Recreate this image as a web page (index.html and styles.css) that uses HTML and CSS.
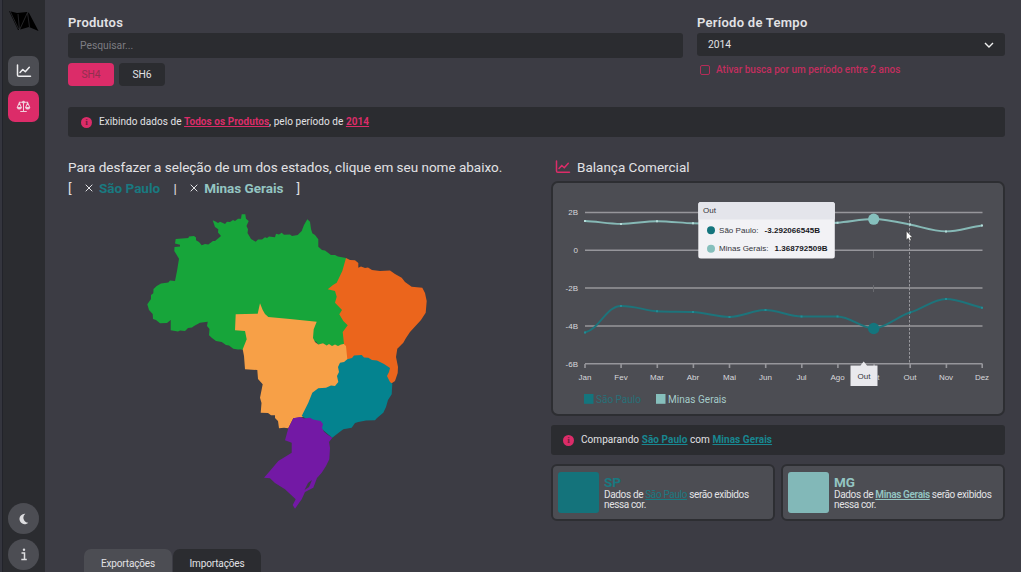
FILE: index.html
```html
<!DOCTYPE html>
<html lang="pt-BR">
<head>
<meta charset="utf-8">
<title>Balança Comercial</title>
<link rel="stylesheet" href="styles.css">
</head>
<body>
<div class="app">
  <nav class="sidebar">
    <svg class="logo" viewBox="0 0 30 20" width="30" height="20"><path d="M0 0L8 2L18 1L20 2L29.500 20L20 16L13 18L9 19Z" fill="#000"/><path d="M9 3L10.500 19L18.500 1.500L20.500 16M1 0L9.500 18" fill="none" stroke="#3a3b40" stroke-width=".6"/></svg>
    <a class="nav-btn"><svg viewBox="0 0 16 14" width="16" height="14"><path d="M1.500 1V11Q1.500 12.300 2.800 12.300H14.500M4 8.500L6.800 5.500L9.300 7.700L13.300 3.300" class="line-icon"/></svg></a>
    <a class="nav-btn active"><svg viewBox="0 0 16 14" width="15" height="13"><path d="M3 2.500H13M8 1V12.200M4.500 12.300H11.500M3.500 3L1.200 8.200H5.800ZM12.500 3L10.200 8.200H14.800Z" class="scale-icon"/><path d="M1 8.300H6Q5.500 10.300 3.500 10.300T1 8.300ZM10 8.300H15Q14.500 10.300 12.500 10.300T10 8.300Z" fill="#f0cfdb"/><circle cx="8" cy="2.300" r="1.500" fill="#f0cfdb"/></svg></a>
    <span class="spacer"></span>
    <a class="nav-btn round"><svg viewBox="0 0 12 12" width="12" height="12"><path d="M7.300.8A5.200 5.200 0 1 0 10.300 9.700A5 5 0 0 1 7.300.8Z" fill="#dddde0"/></svg></a>
    <a class="nav-btn round info"><svg viewBox="0 0 8 13" width="8" height="13"><path d="M1.500 5H4.500V11.500M1.300 11.500H6.800" fill="none" stroke="#dddde0" stroke-width="1.500"/><circle cx="4" cy="1.700" r="1.200" fill="#dddde0"/></svg></a>
  </nav>
  <main class="main">
    <section class="filters">
      <div class="products">
        <h2 class="label">Produtos</h2>
        <div class="search">Pesquisar...</div>
        <div class="toggles"><span class="toggle on">SH4</span><span class="toggle">SH6</span></div>
      </div>
      <div class="period">
        <h2 class="label">Período de Tempo</h2>
        <div class="select"><span>2014</span><svg viewBox="0 0 10 6" width="10" height="6"><path d="M1 1L5 5L9 1" fill="none" stroke="#f0f0f0" stroke-width="1.400"/></svg></div>
        <div class="check"><span class="box"></span><span>Ativar busca por um período entre 2 anos</span></div>
      </div>
    </section>
    <div class="notice"><span class="dot">i</span><p class="notice-text">Exibindo dados de <b class="pink">Todos os Produtos</b>, pelo período de <b class="pink">2014</b></p></div>
    <section class="columns">
      <div class="left">
        <p class="hint">Para desfazer a seleção de um dos estados, clique em seu nome abaixo.</p>
        <div class="states"><span class="bracket">[</span><svg class="x" viewBox="0 0 8 8"><path d="M.7.700L7.300 7.300M7.300.7L.7 7.300"/></svg><b class="sp">São Paulo</b><span class="bar">|</span><svg class="x" viewBox="0 0 8 8"><path d="M.7.700L7.300 7.300M7.300.7L.7 7.300"/></svg><b class="mg">Minas Gerais</b><span class="close">]</span></div>
        <svg class="map" viewBox="140 205 300 310" width="300" height="310">
          <path class="norte" d="M212.700 219.300L216 220.700L218 222L220 220.700L223 222L225 223L227 220.700L230 221L233 219L235 220L238 217.700L241 217.700L241.700 213.300L245.300 213.300L246 217.700L248.700 220L246.500 225L248 228.300L247.500 232L249.300 235L251 238L255.700 240.700L258 238.500L262 238.500L265 236.300L267 237L269 235.500L275 236.300L276 232.700L279 233.500L281.700 231.700L284 233.700L290 233.500L292 235L297.700 234L301.700 230L304 224L307.300 218.300L310 220.700L311 228L312.300 232.300L315 234L318.300 238.300L318.300 245.700L322 249L325 249.500L331 254L335 254L338 255.500L346 257L350 300L347.700 345L344.300 343.300L341 344L338 345.700L335 344L332 345.500L329 343.500L326.700 345L323 342.500L318.300 343.700L316 340.500L240 349L242.700 348.300L238 348.500L233.300 347.700L229 344.500L226 344L221.700 341L216 340L212 337L209 334.300L209.500 328L207 325L207.700 320.700L200 321.700L194 325L192 326.500L188 327L185 330L180 329.500L178 330.500L170.700 329.300L170.700 319L167 322L160 322.300L156 319L153 318L152.700 313L149 309L147.300 303.300L151 298L151 294L153.300 292.300L153.500 288L156.700 285L161 282.500L168.300 281.500L170 279.500L175 280L177 270L179 257.700L174.300 250L174.500 246L180 245.500L180 243.800L175 242.500L175.700 238L188.300 237L189 235.500L194 235L196 236.500L196 239.300L199 241L201.700 244.300L205 243L208.300 243.500L213 240L215 240L221 235L218 231.500L218.300 228.300L215 226Z"/>
          <path class="centro" d="M260 302.300L262.700 309L265 313L268.300 316L290 318L316.700 320.700L313.700 328.300L313 337L315 341L318.300 343.500L323 342.200L326.700 344.500L329 343L332 345L335 343.500L338 345L341 343.500L348 342L350 360L338 386L303 416L293.300 417.300L288.300 427.300L284 426.700L279 427.300L278 420L275 417L275 414.300L271 414.300L268 412L260.700 411.700L261.500 402L260 396.700L262.700 383.300L258 378L257.300 369L245 368.300L244 355L242.700 348.300L246.700 338.300L245 330L235 329.300L235.700 313.300L257.700 312.700Z"/>
          <path class="nordeste" d="M346 257L350 259L355 259.300L358.300 262L358.300 266.700L361 265.500L365 267L368 266.500L372 269L380 270L390 269.500L395 273L401.700 276.700L405 281L411.700 285.700L422.300 286.700L425 292L426.700 300L425.700 311.700L421 319L410 331L406 337L403.300 341.700L397.300 347.700L396 356L398 366L397.700 372L395 380L391 382.700L380 376L348 360L347.300 358.300L346 345L344 343.300L342.700 331L347.700 324.300L343.300 320L339.300 313.300L342 309L335 301.700L336.700 295.700L335 290L327.700 288.300L333 284L336.700 281.700L342.300 270Z"/>
          <path class="sudeste" d="M347.300 358.300L352 357L354 354.500L361.700 354L364 356.500L368.300 356.700L372 359L377 359.500L380 361L384 363L390 367L389 371L387 375L390 381L392.300 382.700L391.700 393.300L388 399L386 406L383.300 411.700L377 417L375 419.300L366 419.500L358.300 421L355 422L351.700 426.700L343.300 428.300L337 433L332.300 436.700L318 425L301.700 415L308.300 401.700L312.300 391.700L318.300 387.300L326 386.700L331 384.500L335 385L338.300 381L337 375L339 371L338 366L340 361.700L344 361Z"/>
          <path class="sul" d="M293.300 417.300L300 416L304 417.500L310 416.700L313 418.500L320.700 420L323 423L322 427L324 430.700L328 434L332.300 436.700L329 441L330 447L329.300 458.300L326 465L321.700 471.700L317 477L313.300 486.700L305 491L301.700 498.300L299 502L295 507.700L292.700 504L295.700 498.300L285 488.300L275 482L270 477.300L264 476.700L269 471L278.300 460L291.700 451.700L291.700 441.700L285 439.300L288.300 427.300Z"/>
          <path d="M312 479L308 482L304.500 489L309 486Z" fill="#3c3c44"/>
        </svg>
        <div class="tabs"><span class="tab on">Exportações</span><span class="tab">Importações</span></div>
      </div>
      <div class="right">
        <h3 class="chart-title"><svg viewBox="0 0 16 14" width="16" height="14"><path d="M1.500 1V11Q1.500 12.300 2.800 12.300H14.500M4 8.500L6.800 5.500L9.300 7.700L13.300 3.300"/></svg><span>Balança Comercial</span></h3>
        <div class="chart-card">
          <svg class="chart" viewBox="553 183 450 230" width="450" height="230">
            <path class="grid" d="M585 212.500H982.500M585 250.300H982.500M585 288H982.500M585 326H982.500M585 363.800H982.500M585 364V368M621.100 364V368M657.300 364V368M693.400 364V368M729.500 364V368M765.700 364V368M801.800 364V368M837.900 364V368M874.100 364V368M910.200 364V368M946.400 364V368M982.200 364V368"/>
            <path class="ghost" d="M873.500 251V258M873.500 285V292"/>
            <path class="hover" d="M909.500 212V364"/>
            <g class="axis" text-anchor="end"><text x="578" y="215.300">2B</text><text x="578" y="253">0</text><text x="578" y="290.800">-2B</text><text x="578" y="328.800">-4B</text><text x="578" y="366.600">-6B</text></g>
            <g class="axis month" text-anchor="middle"><text x="585" y="380">Jan</text><text x="621" y="380">Fev</text><text x="657" y="380">Mar</text><text x="693" y="380">Abr</text><text x="729.500" y="380">Mai</text><text x="765.500" y="380">Jun</text><text x="801.500" y="380">Jul</text><text x="837.500" y="380">Ago</text><text x="873.500" y="380">Set</text><text x="910" y="380">Out</text><text x="946" y="380">Nov</text><text x="982" y="380">Dez</text></g>
            <path class="series mg-line" d="M585 221C597 221.500 609 223.900 621 223.900S645 221.200 657 221.200S681 222.800 693 223.300S718 224 729.500 224S754 223 765.500 223S790 224 801.500 224S826 223.500 837.500 222.700S862 219 873.500 219S898 222 910 224.500S934 231.400 946 231.400S970 227 982 225.500"/>
            <path class="series sp-line" d="M585 332.500C600 329 606 306 621 306S645 310.500 657 311.300S681 311.400 693 312S718 317 729.500 317S754 310 765.500 310S790 316.500 801.500 316.500H837.500C850 316.500 862 328.500 873.500 328.500S898 316 910 312.500S934 299 946 299S970 305 982 307.700"/>
            <path class="marks" d="M585 221h.01M621 223.900h.01M657 221.200h.01M693 223.300h.01M837.500 222.700h.01M910 224.500h.01M946 231.400h.01M982 225.500h.01"/>
            <path class="marks sp-marks" d="M585 332.500h.01M621 306h.01M657 311.300h.01M693 312h.01M729.500 317h.01M765.500 310h.01M801.500 316.500h.01M837.500 316.500h.01M910 312.500h.01M946 299h.01M982 307.700h.01"/>
            <circle cx="873.700" cy="219.200" r="5.600" fill="#86c0bd"/><circle cx="873.700" cy="328.500" r="5.700" fill="#14757d"/>
            <rect x="584" y="394" width="9.500" height="9.800" fill="#14757d"/><text class="legend" x="596" y="402.500" textLength="45" fill="#287078">São Paulo</text>
            <rect x="656" y="394" width="9.500" height="9.800" fill="#86bfbc"/><text class="legend" x="668" y="402.500" textLength="58.500" fill="#a5cbc9">Minas Gerais</text>
            <path d="M850.500 365.500H860.500L863.700 361.500L867 365.500H877.500V386H850.500Z" fill="#e9e9ed"/><text class="tip" x="857.500" y="378.800" textLength="13">Out</text>
            <rect x="698.300" y="202" width="136.500" height="56.500" rx="2.500" fill="#f2f2f5"/><path d="M698.300 219.500V204.500Q698.300 202 700.800 202H832.300Q834.800 202 834.800 204.500V219.500Z" fill="#e4e5eb"/>
            <text class="tip" x="703" y="213.300" textLength="13">Out</text>
            <circle cx="711" cy="230.300" r="4" fill="#14757d"/><text class="tip" x="719" y="233" textLength="39.500">São Paulo:</text><text class="tip strong" x="764.500" y="233" textLength="55.500">-3.292066545B</text>
            <circle cx="711" cy="248.700" r="4" fill="#86bfbc"/><text class="tip" x="719" y="251.300" textLength="49.500">Minas Gerais:</text><text class="tip strong" x="774.500" y="251.300" textLength="53">1.368792509B</text>
            <path d="M906.300 231L906.300 240L908.300 238.200L909.700 241L911.200 240.200L910 237.500L912.500 237.200Z" fill="#fff" stroke="#222" stroke-width=".5"/>
          </svg>
        </div>
        <div class="notice compare"><span class="dot">i</span><p class="notice-text">Comparando <b class="teal">São Paulo</b> com <b class="teal">Minas Gerais</b></p></div>
        <div class="cards">
          <div class="card"><span class="swatch sp-bg"></span><div><h4 class="code sp">SP</h4><p class="desc">Dados de <u class="sp">São Paulo</u> serão exibidos<br>nessa cor.</p></div></div>
          <div class="card"><span class="swatch mg-bg"></span><div><h4 class="code mg">MG</h4><p class="desc">Dados de <u class="mg bold">Minas Gerais</u> serão exibidos<br>nessa cor.</p></div></div>
        </div>
      </div>
    </section>
  </main>
</div>
</body>
</html>
```
FILE: styles.css
```css
* { box-sizing: border-box; }
body { margin: 0; background: #3c3c44; color: #e2e2e5; font-family: Roboto, "Liberation Sans", sans-serif; overflow: hidden; }
h2, h3, h4, p { margin: 0; }
.app { display: flex; height: 572px; overflow: hidden; }
.sidebar { width: 45px; flex: none; background: #2b2c30; border-left: 2px solid #34353e; box-shadow: inset 1px 0 #22232a; padding: 11px 0 2px 6px; display: flex; flex-direction: column; }
.logo { display: block; margin: 0 0 25px 1px; }
.nav-btn { width: 31px; height: 30px; border-radius: 7px; background: #4c4d53; display: flex; align-items: center; justify-content: center; margin-bottom: 5px; flex: none; }
.nav-btn.active { background: #dc2c69; height: 31px; }
.nav-btn.round { border-radius: 50%; width: 31px; height: 31px; }
.nav-btn.round.info { margin: 0; }
.line-icon { fill: none; stroke: #eeeef0; stroke-width: 1.5; stroke-linecap: round; stroke-linejoin: round; }
.scale-icon { fill: none; stroke: #f0cfdb; stroke-width: 1.1; stroke-linejoin: round; }
.spacer { flex: 1; }
.main { flex: 1; min-width: 0; padding: 14px 16px 0 23px; display: flex; flex-direction: column; }
.filters { display: flex; gap: 14px; height: 93px; flex: none; }
.products { width: 615px; }
.period { flex: 1; }
.label { font-size: 13px; line-height: 17px; font-weight: 600; letter-spacing: .27px; height: 19px; }
.search { height: 25px; background: #2b2c30; border-radius: 3px; padding: 0 12px; line-height: 25px; font-size: 10.300px; color: #7d7d83; }
.toggles { display: flex; gap: 5px; margin-top: 5px; }
.toggle { width: 46px; height: 23px; border-radius: 4px; background: #2b2c30; text-align: center; line-height: 23px; font-size: 10.300px; }
.toggle.on { background: #dc2c69; color: #91304f; }
.select { height: 23px; background: #2b2c30; border-radius: 3px; display: flex; justify-content: space-between; align-items: center; padding: 0 11px; font-size: 10.300px; }
.check { display: flex; align-items: center; gap: 6px; margin: 6px 0 0 3px; font-size: 10px; line-height: 16px; font-weight: 500; color: #c22e5e; }
.box { width: 10px; height: 10px; border: 1px solid #b52c58; border-radius: 2px; }
.notice { height: 30px; flex: none; border-radius: 3px; background: #2b2c30; display: flex; align-items: center; gap: 7px; padding-left: 13px; }
.dot { width: 11px; height: 11px; border-radius: 50%; background: #dc2c69; color: #701d3b; font: bold 9px/11px "Liberation Serif", serif; text-align: center; }
.notice-text { font-size: 10px; line-height: 14px; white-space: nowrap; letter-spacing: .06px; }
.notice-text b { text-decoration: underline; font-weight: 700; }
.pink { color: #dc2c69; }
.teal { color: #188791; }
.sp { color: #197980; }
.mg { color: #94c5c2; }
.columns { flex: 1; display: flex; min-height: 0; }
.left { width: 483px; padding-top: 21px; flex: none; display: flex; flex-direction: column; }
.hint { font-size: 13.500px; line-height: 19px; white-space: nowrap; letter-spacing: -.01px; }
.states { height: 20px; margin: 3px 0 2px; display: flex; align-items: center; font-size: 13.500px; }
.x { width: 8px; height: 8px; margin-right: 6px; fill: none; stroke: #e2e2e5; }
.bracket { width: 17px; }
.bar { width: 30px; text-align: center; }
.close { margin-left: 13px; }
.map { display: block; margin: 8px 0 0 72px; flex: none; }
.norte { fill: #17a53a; }
.nordeste { fill: #eb651c; }
.centro { fill: #f7a047; }
.sudeste { fill: #04838f; }
.sul { fill: #7319a5; }
.tabs { display: flex; gap: 1px; margin: 33px 0 0 16px; }
.tab { width: 88px; height: 30px; flex: none; border-radius: 7px 7px 0 0; background: #2b2c30; font-size: 10px; letter-spacing: -.15px; line-height: 30px; text-align: center; }
.tab.on { background: #4c4d53; }
.right { flex: 1; min-width: 0; padding-top: 18px; }
.chart-title { height: 26px; padding: 0 0 2px 4px; display: flex; align-items: center; gap: 6px; font-size: 13.500px; font-weight: 400; }
.chart-title svg { fill: none; stroke: #dc2c69; stroke-width: 1.5; stroke-linecap: round; }
.chart-card { width: 454px; height: 235px; border: 2px solid #2d2e32; border-radius: 7px; background: #4c4d53; }
.chart { display: block; }
.grid { fill: none; stroke: #96969b; stroke-width: 1.6; }
.ghost { stroke: #68696e; }
.hover { stroke: #98989d; stroke-dasharray: 2.5 1.5; }
.axis text { fill: #d8d8dc; font: 8px "Liberation Sans", sans-serif; }
.series { fill: none; stroke-width: 1.9; }
.mg-line { stroke: #86b9b6; }
.sp-line { stroke: #1d747b; }
.marks { stroke: #b4dcd9; stroke-width: 2; stroke-linecap: square; }
.sp-marks { stroke: #218d95; }
.legend { font-size: 10px; }
.tip { font: 8px "Liberation Sans", sans-serif; fill: #33343a; }
.strong { font-weight: 700; fill: #17181d; }
.compare { margin-top: 9px; width: 454px; padding-left: 12px; }
.cards { display: flex; gap: 6px; margin-top: 9px; width: 454px; }
.card { flex: 1; height: 57px; border: 2px solid #2d2e32; border-radius: 6px; background: #4c4d53; display: flex; gap: 5px; padding: 6px 0 0 5px; }
.swatch { width: 41px; height: 41px; border-radius: 3px; flex: none; }
.sp-bg { background: #14737b; }
.mg-bg { background: #82b8b8; }
.code { font-size: 13.500px; line-height: 13px; padding-top: 4px; font-weight: 700; }
.desc { font-size: 10px; line-height: 10px; padding-top: 1px; white-space: nowrap; letter-spacing: -.35px; }
.bold { font-weight: 600; }
```
